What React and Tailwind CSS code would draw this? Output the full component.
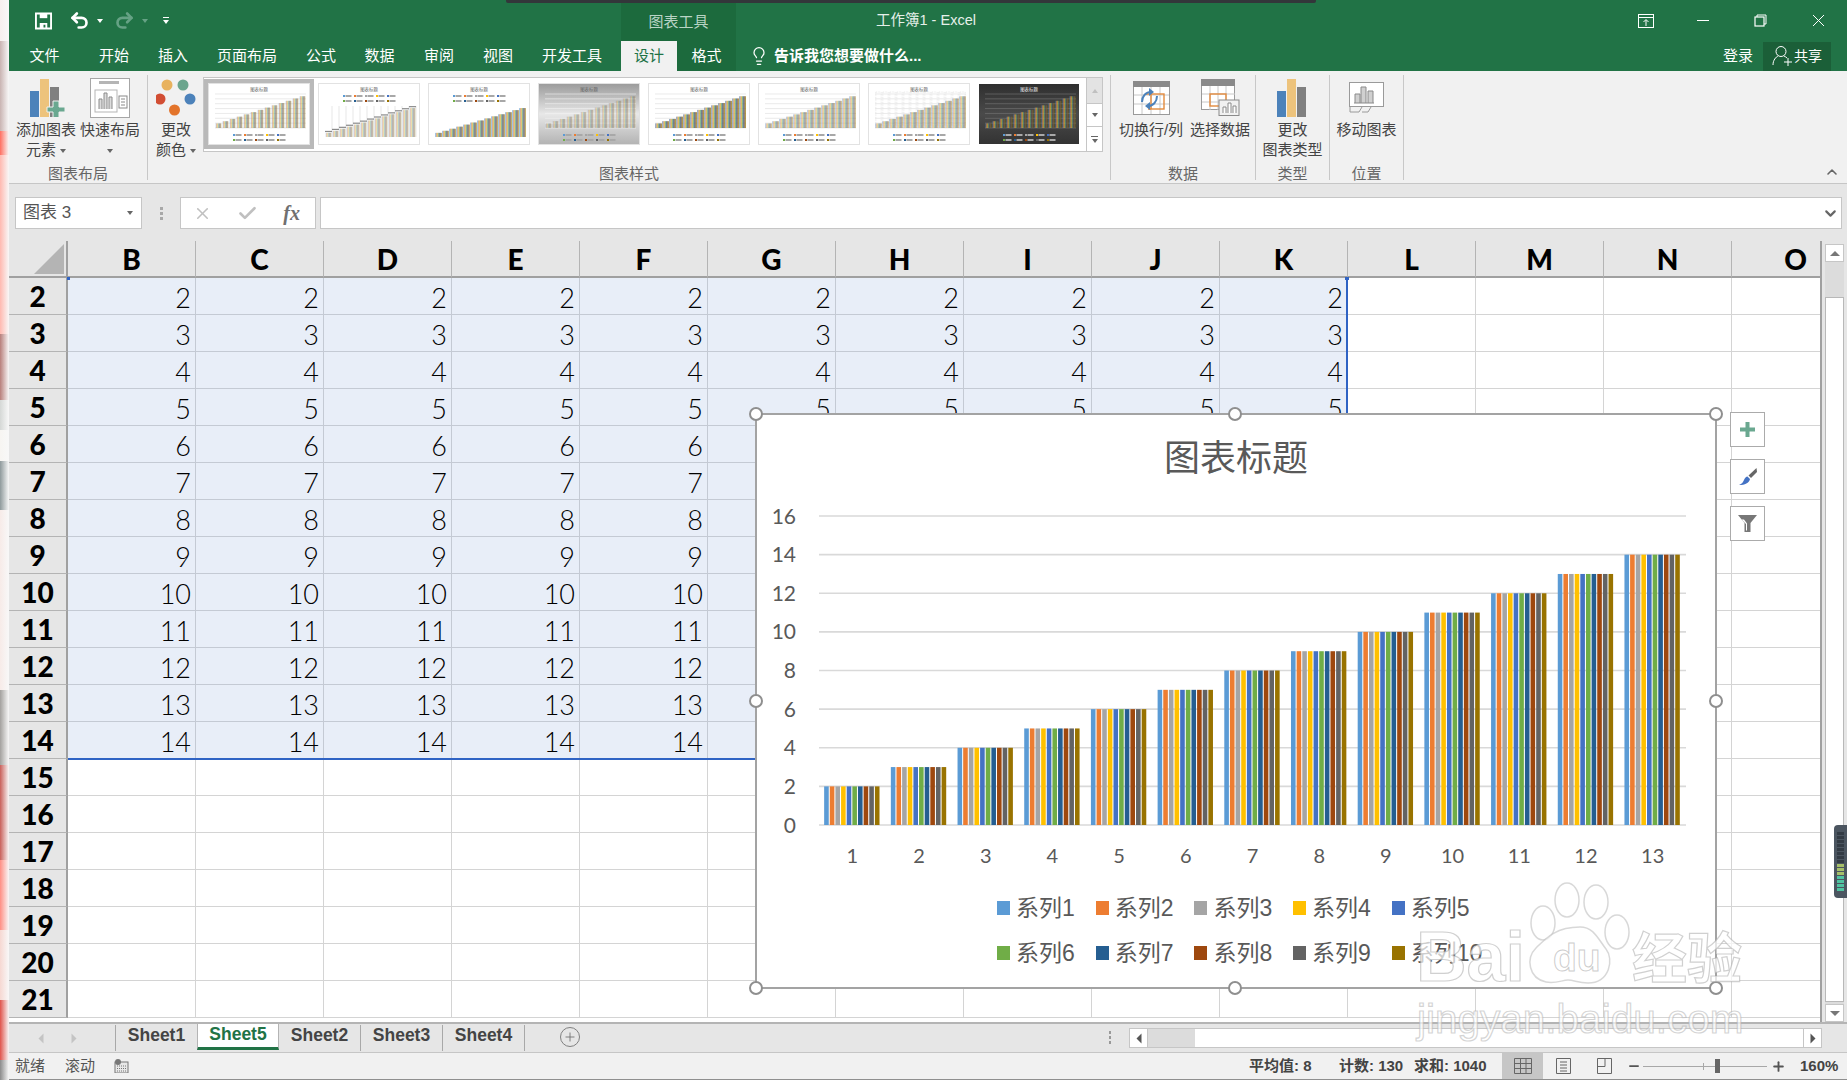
import React from 'react';
import { Undo2, Redo2, Lightbulb, Minus, Plus, X, Check, ChevronUp, ChevronDown } from 'lucide-react';

const COLORS = ['#5B9BD5', '#ED7D31', '#A5A5A5', '#FFC000', '#4472C4', '#70AD47', '#255E91', '#9E480E', '#636363', '#997300'];
const COLS = ['B', 'C', 'D', 'E', 'F', 'G', 'H', 'I', 'J', 'K', 'L', 'M', 'N', 'O'];
const ROWS = [2, 3, 4, 5, 6, 7, 8, 9, 10, 11, 12, 13, 14, 15, 16, 17, 18, 19, 20, 21];
const CATS = [1, 2, 3, 4, 5, 6, 7, 8, 9, 10, 11, 12, 13];

// the sliver of another window at the left edge
const STRIP = [
  [41, 'bg-[#f6efee]'], [90, 'bg-[#c9b4b2]'], [24, 'bg-[#ff6f61]'], [179, 'bg-[#ffb9b0]'], [66, 'bg-[#b87f7b]'],
  [30, 'bg-[#d5d8d6]'], [31, 'bg-[#f7f5f2]'], [49, 'bg-[#8f9a9c]'], [180, 'bg-[#f7ebe8]'], [75, 'bg-[#a3a19e]'],
  [95, 'bg-[#c9605a]'], [70, 'bg-[#ff8f84]'], [70, 'bg-[#f6d8d2]'], [60, 'bg-[#e0534b]'], [20, 'bg-[#8b8b8b]'],
];

const THUMBS = [
  { box: 'bg-white', top: false, grid: 'lines', op: 0.65, gap: 0.78 },
  { box: 'bg-white', top: true, grid: 'vert', op: 0.5, gap: 0.78 },
  { box: 'bg-white', top: true, grid: 'none', op: 0.9, gap: 0.9 },
  { box: 'bg-linear-to-b from-[#9c9c9c] via-[#e8e8e8] to-[#b4b4b4]', top: false, grid: 'band', op: 0.4, gap: 0.78 },
  { box: 'bg-white', top: false, grid: 'lines', op: 1, gap: 0.95 },
  { box: 'bg-white', top: false, grid: 'lines', op: 0.6, gap: 0.92 },
  { box: 'bg-white', top: false, grid: 'hatch', op: 0.6, gap: 0.92 },
  { box: 'bg-linear-to-b from-[#2f2f2f] via-[#4a4a4a] to-[#333333]', top: false, grid: 'dark', op: 0.85, gap: 0.8, dark: true },
];

const Thumb = ({ box, top, grid, op, gap, dark }) => {
  const y0 = top ? 22 : 10;
  const y1 = top ? 53 : 44;
  const x0 = 6;
  const x1 = 97;
  const gw = (x1 - x0) / 13;
  const lineCol = dark ? '#777777' : '#dcdcdc';
  return (
    <div className={`w-[100px] h-[60px] ${box} ${dark ? '' : 'outline outline-[#e2e2e2]'}`}>
      <svg width="100" height="60" viewBox="0 0 100 60" className="block">
        <text x="50" y="6.5" textAnchor="middle" fontSize="4.4" fill={dark ? '#eeeeee' : '#666666'} className="[font-family:'Noto_Sans_CJK_SC',sans-serif]">图表标题</text>
        {grid === 'lines' || grid === 'dark' || grid === 'band' || grid === 'hatch'
          ? [0, 1, 2, 3, 4, 5, 6, 7].map((n) => (
              <line key={n} x1={x0} x2={x1} y1={y0 + n * ((y1 - y0) / 7)} y2={y0 + n * ((y1 - y0) / 7)} stroke={grid === 'band' ? '#f4f4f4' : lineCol} strokeWidth="0.6" />
            ))
          : null}
        {grid === 'vert'
          ? CATS.map((n) => <line key={n} x1={x0 + n * gw} x2={x0 + n * gw} y1={y0} y2={y1} stroke="#cfcfcf" strokeWidth="0.5" />)
          : null}
        {grid === 'hatch'
          ? CATS.map((n) => <rect key={n} x={x0 + (n - 1) * gw + 0.8} y={y0 - 2} width={gw - 1.6} height={y1 - y0} fill="none" stroke="#d8d8d8" strokeWidth="0.5" strokeDasharray="1.5 1" />)
          : null}
        {CATS.map((c, i) =>
          COLORS.map((col, k) => {
            const h = (y1 - y0) * ((c + 1) / 15);
            const bw = (gw * gap) / 10;
            return <rect key={k} x={x0 + i * gw + ((1 - gap) * gw) / 2 + k * bw} y={y1 - h} width={bw} height={h} fill={col} fillOpacity={op} />;
          })
        )}
        {grid === 'vert' ? CATS.map((c, i) => <rect key={c} x={x0 + i * gw} y={y1 - (y1 - y0) * ((c + 1) / 15) - 2} width={gw} height="1.2" fill="#8a8a8a" />) : null}
        {[0, 1].map((r) =>
          COLORS.slice(r * 5, r * 5 + 5).map((col, k) => (
            <g key={k}>
              <rect x={24 + k * 11} y={(top ? 11 : 50) + r * 5} width="2" height="2" fill={col} />
              <rect x={26.5 + k * 11} y={(top ? 11 : 50) + r * 5} width="6" height="2" fill={dark ? '#aaaaaa' : '#a8a8a8'} />
            </g>
          ))
        )}
      </svg>
    </div>
  );
};

const BarsIcon = ({ plus }) => (
  <svg width="38" height="38" viewBox="0 0 38 38" className="block">
    <rect x="3" y="12" width="9" height="26" fill="#4c82ba" />
    <rect x="13" y="0" width="9" height="38" fill="#edc37c" />
    <rect x="23" y="8" width="9" height="30" fill="#808080" />
    {plus ? <path d="M26 22h6v6h6v5h-6v6h-6v-6h-6v-5h6z" fill="#6aa890" stroke="#f1f1f1" strokeWidth="1" /> : null}
  </svg>
);

const QuickLayoutIcon = () => (
  <svg width="40" height="40" viewBox="0 0 40 40" className="block">
    <rect x="0.5" y="0.5" width="39" height="39" fill="#fff" stroke="#a6a6a6" />
    <rect x="9" y="3" width="20" height="3" fill="#b5b5b5" />
    <rect x="5" y="12" width="22" height="22" fill="none" stroke="#b5b5b5" />
    <path d="M9 31v-10h3v10M14 31v-16h3v16M19 31v-12h3v12" fill="#dcdcdc" stroke="#8a8a8a" />
    <rect x="29" y="18" width="8" height="12" fill="none" stroke="#8a8a8a" />
    <path d="M31 21h4M31 24h4M31 27h4" stroke="#8a8a8a" />
  </svg>
);

const ColorsIcon = () => (
  <svg width="40" height="38" viewBox="0 0 40 38" className="block">
    <circle cx="11" cy="6" r="5.5" fill="#e8b25e" />
    <circle cx="27" cy="6" r="5.5" fill="#6ba58d" />
    <circle cx="4" cy="20" r="5.5" fill="#d24e33" />
    <circle cx="34" cy="20" r="5.5" fill="#4c82ba" />
    <circle cx="18.5" cy="31" r="5.5" fill="#e3742b" />
  </svg>
);

const SwitchIcon = () => (
  <svg width="37" height="34" viewBox="0 0 37 34" className="block">
    <rect x="0.5" y="0.5" width="36" height="33" fill="#fff" stroke="#9a9a9a" />
    <rect x="0" y="0" width="37" height="6" fill="#8a8a8a" />
    <path d="M1 14h35M1 23h35M9 6v27M18 6v27M27 6v27" stroke="#c8c8c8" />
    <rect x="18" y="13" width="13" height="15" fill="none" stroke="#e38a3d" strokeWidth="1.4" />
    <path d="M18 13h-6M18 28h-3" stroke="#e38a3d" strokeWidth="1.4" />
    <path d="M9 21c0-6 4-10 9-10M24 15c0 6-4 10-9 10" fill="none" stroke="#4c82ba" strokeWidth="2" />
    <path d="M16 7l5 4-5 4zM17 21l-5 4 5 4z" fill="#4c82ba" />
  </svg>
);

const SelectDataIcon = () => (
  <svg width="39" height="37" viewBox="0 0 39 37" className="block">
    <rect x="0.5" y="0.5" width="33" height="30" fill="#fff" stroke="#9a9a9a" />
    <rect x="0" y="0" width="34" height="7" fill="#8a8a8a" />
    <path d="M1 15h33M1 23h33M9 7v24M17 7v24M25 7v24" stroke="#c8c8c8" />
    <rect x="9" y="15" width="16" height="12" fill="none" stroke="#e38a3d" strokeWidth="1.4" />
    <rect x="18" y="21" width="20" height="15.5" fill="#f1f1f1" stroke="#8a8a8a" />
    <path d="M22 34v-6h3v6M27 34v-10h3v10M32 34v-7h3v7" fill="#fff" stroke="#8a8a8a" />
  </svg>
);

const MoveChartIcon = () => (
  <svg width="35" height="31" viewBox="0 0 35 31" className="block">
    <rect x="0.5" y="0.5" width="34" height="24" fill="#fff" stroke="#9a9a9a" />
    <path d="M6 21v-9h5v9M12 21v-16h5v16M19 21v-12h5v12" fill="#d0d0d0" stroke="#8a8a8a" />
    <path d="M5 21h20" stroke="#8a8a8a" />
    <path d="M1 25v5h9l3-5M13 30h6l3-5" fill="none" stroke="#9a9a9a" />
  </svg>
);

const SaveIcon = () => (
  <svg width="17" height="18" viewBox="0 0 18 18" className="block">
    <path d="M1 1h16v16H1z" fill="none" stroke="#fff" strokeWidth="2" />
    <rect x="5" y="1" width="8" height="5" fill="#fff" />
    <path d="M5 17v-6h8v6h-2v-4H9v4z" fill="#fff" />
  </svg>
);

const Caret = ({ className }) => <span className={`inline-block w-0 h-0 border-x-[3.5px] border-x-transparent border-t-[4px] ${className}`} />;

const RibbonBtn = ({ w, h, icon, children }) => (
  <div className={`${w} flex flex-col items-center`}>
    <div className={`${h} flex items-center justify-center`}>{icon}</div>
    <div className="text-[15px] leading-[20px] text-center text-[#444444] whitespace-nowrap">{children}</div>
  </div>
);

const Group = ({ w, label, children }) => (
  <div className="flex">
    <div className={`${w} flex flex-col pt-[4px]`}>
      <div className="h-[90px] flex">{children}</div>
      <div className="h-[18px] leading-[18px] text-[15px] text-center text-[#666666]">{label}</div>
    </div>
    <div className="w-px h-[105px] mt-[4px] bg-[#c8c8c8]" />
  </div>
);

const TitleBar = () => (
  <div className="h-[41px] flex items-stretch text-white">
    <div className="w-[612px] flex items-center">
      <div className="ml-[26px]"><SaveIcon /></div>
      <Undo2 size={21} strokeWidth={3} className="ml-[17px]" />
      <Caret className="ml-[7px] border-t-white" />
      <Redo2 size={21} strokeWidth={3} className="ml-[11px] text-[#66a285]" />
      <Caret className="ml-[7px] border-t-[#66a285]" />
      <div className="ml-[15px] flex flex-col items-center gap-[2px]">
        <div className="w-[6px] h-px bg-white" />
        <Caret className="border-t-white" />
      </div>
    </div>
    <div className="w-[115px] mt-[3px] bg-[#1c6a3d] flex items-center justify-center text-[15px] text-[#b9d4c5]">图表工具</div>
    <div className="w-[380px] pt-[1px] flex items-center justify-center text-[14.5px] text-[#e6f0ea]">工作簿1 - Excel</div>
    <div className="flex-1" />
    <div className="flex items-center">
      <div className="w-[57.5px] flex justify-center">
        <svg width="16" height="14" viewBox="0 0 16 14"><rect x="0.5" y="0.5" width="15" height="13" fill="none" stroke="#fff" /><path d="M1 3.5h14M8 12V6M5.5 8 8 5.5 10.5 8" fill="none" stroke="#fff" /></svg>
      </div>
      <div className="w-[57.5px] flex justify-center"><div className="w-[12px] h-px bg-white" /></div>
      <div className="w-[57.5px] flex justify-center">
        <svg width="13" height="13" viewBox="0 0 13 13"><path d="M3 3V1h9v9h-2" fill="none" stroke="#fff" /><rect x="1" y="3" width="9" height="9" fill="none" stroke="#fff" strokeWidth="1.2" /></svg>
      </div>
      <div className="w-[57.5px] flex justify-center">
        <svg width="13" height="13" viewBox="0 0 13 13"><path d="M1 1l11 11M12 1 1 12" stroke="#fff" /></svg>
      </div>
    </div>
  </div>
);

const TABS = [['文件', 'w-[71px]'], ['开始', 'w-[68px]'], ['插入', 'w-[50px]'], ['页面布局', 'w-[98px]'], ['公式', 'w-[50px]'], ['数据', 'w-[67px]'], ['审阅', 'w-[52px]'], ['视图', 'w-[66px]'], ['开发工具', 'w-[82px]']];

const TabRow = () => (
  <div className="h-[30px] flex items-stretch text-[15px] text-white">
    {TABS.map(([t, w]) => (
      <div key={t} className={`${w} flex items-center justify-center`}>{t}</div>
    ))}
    <div className="w-[8px]" />
    <div className="w-[115px] bg-[#1c6a3d] flex">
      <div className="w-[56px] bg-[#f1f1f1] text-[#217346] flex items-center justify-center">设计</div>
      <div className="flex-1 flex items-center justify-center">格式</div>
    </div>
    <div className="ml-[13px] flex items-center gap-[5px] font-bold text-[15px]">
      <Lightbulb size={20} strokeWidth={1.5} />
      告诉我您想要做什么...
    </div>
    <div className="flex-1" />
    <div className="flex items-center mr-[16px]">
      <div className="mr-[10px]">登录</div>
      <div className="w-[68px] h-[29px] bg-[#1b5f38] flex items-center justify-center gap-[2px]">
        <svg width="20" height="22" viewBox="0 0 20 22"><circle cx="9" cy="6.5" r="5" fill="none" stroke="#fff" /><path d="M1 20c0-5 3-8 5-9M12 11c1 .5 2 1 3 2M12 17h8M16 13v8" fill="none" stroke="#fff" /></svg>
        <span className="text-[14px]">共享</span>
      </div>
    </div>
  </div>
);

const Ribbon = () => (
  <div className="h-[113px] flex bg-[#f1f1f1] border-b border-[#c6c6c6]">
    <Group w="w-[138px]" label="图表布局">
      <div className="pl-[7px] flex gap-[4px]">
        <RibbonBtn w="w-[60px]" h="h-[45px]" icon={<BarsIcon plus />}>
          添加图表<br />元素 <Caret className="border-t-[#666666] align-middle" />
        </RibbonBtn>
        <RibbonBtn w="w-[60px]" h="h-[45px]" icon={<QuickLayoutIcon />}>
          快速布局<br /><Caret className="border-t-[#666666] align-middle" />
        </RibbonBtn>
      </div>
    </Group>
    <Group w="w-[962px]" label="图表样式">
      <div className="ml-px">
        <RibbonBtn w="w-[54px]" h="h-[45px]" icon={<ColorsIcon />}>
          更改<br />颜色 <Caret className="border-t-[#666666] align-middle" />
        </RibbonBtn>
      </div>
      <div className="w-[900px] h-[75px] mt-[2px] border border-[#c6c6c6] bg-white flex">
        <div className="flex flex-1 py-px">
          {THUMBS.map((t, i) => (
            <div key={i} className={`w-[110px] h-[70px] flex items-center justify-center ${i === 0 ? 'bg-[#b9b9b9]' : ''}`}>
              <Thumb {...t} />
            </div>
          ))}
        </div>
        <div className="w-[16px] flex flex-col border-l border-[#c6c6c6]">
          <div className="h-[26px] bg-[#e3e3e3] border-b border-[#c6c6c6] flex items-center justify-center"><Caret className="rotate-180 border-t-[#c0c0c0]" /></div>
          <div className="h-[23px] bg-white border-b border-[#c6c6c6] flex items-center justify-center"><Caret className="border-t-[#666666]" /></div>
          <div className="flex-1 bg-white flex flex-col items-center justify-center gap-[2px]"><div className="w-[7px] h-px bg-[#666666]" /><Caret className="border-t-[#666666]" /></div>
        </div>
      </div>
    </Group>
    <Group w="w-[144px]" label="数据">
      <div className="pl-[6px] flex gap-px">
        <RibbonBtn w="w-[68px]" h="h-[45px]" icon={<SwitchIcon />}>切换行/列</RibbonBtn>
        <RibbonBtn w="w-[68px]" h="h-[45px]" icon={<SelectDataIcon />}>选择数据</RibbonBtn>
      </div>
    </Group>
    <Group w="w-[73px]" label="类型">
      <RibbonBtn w="w-[73px]" h="h-[45px]" icon={<BarsIcon />}>
        更改<br />图表类型
      </RibbonBtn>
    </Group>
    <Group w="w-[73px]" label="位置">
      <RibbonBtn w="w-[73px]" h="h-[45px]" icon={<MoveChartIcon />}>移动图表</RibbonBtn>
    </Group>
    <div className="flex-1 flex items-end justify-end pb-[3px] pr-[7px]">
      <ChevronUp size={16} strokeWidth={2.4} className="text-[#666666]" />
    </div>
  </div>
);

const FormulaBar = () => (
  <div className="h-[57px] flex items-start pt-[13px] bg-[#e6e6e6]">
    <div className="ml-[6px] w-[127px] h-[32px] bg-white border border-[#c6c6c6] flex items-center justify-between pl-[7px] pr-[8px] text-[17px] text-[#555555]">
      图表 3
      <Caret className="border-t-[#666666]" />
    </div>
    <div className="w-[38px] h-[32px] flex flex-col items-center justify-center gap-[2px]">
      <div className="w-[3px] h-[3px] bg-[#a8a8a8]" />
      <div className="w-[3px] h-[3px] bg-[#a8a8a8]" />
      <div className="w-[3px] h-[3px] bg-[#a8a8a8]" />
    </div>
    <div className="w-[136px] h-[32px] bg-white border border-[#c6c6c6] flex items-center justify-between pl-[12px] pr-[15px] text-[#c0c0c0]">
      <X size={19} strokeWidth={2} />
      <Check size={21} strokeWidth={3} />
      <span className="[font-family:'Liberation_Serif',serif] italic font-bold text-[20px] text-[#707070]">fx</span>
    </div>
    <div className="ml-[4px] w-[1522px] h-[32px] bg-white border border-[#c6c6c6] flex items-center justify-end pr-[2px]">
      <ChevronDown size={17} strokeWidth={3} className="text-[#666666]" />
    </div>
  </div>
);

const SheetGrid = () => (
  <div className="w-[1813px] h-full overflow-hidden border-r-2 border-[#a0a0a0] grid grid-cols-[59px_repeat(14,128px)] auto-rows-[37px] bg-white">
    <div className="bg-[#e6e6e6] border-b-2 border-r-2 border-[#a0a0a0] flex items-end justify-end p-[2px]">
      <svg width="30" height="30" viewBox="0 0 30 30"><polygon points="30,0 30,30 0,30" fill="#b4b4b4" /></svg>
    </div>
    {COLS.map((c) => (
      <div key={c} className="bg-[#e6e6e6] border-b-2 border-r border-b-[#a0a0a0] border-r-[#b4b4b4] flex items-center justify-center text-[28px] font-black text-black [font-family:Lato,sans-serif]">{c}</div>
    ))}
    {ROWS.map((r) => (
      <React.Fragment key={r}>
        <div className="bg-[#e6e6e6] border-b border-r-2 border-b-[#b4b4b4] border-r-[#a0a0a0] flex items-center justify-center text-[28px] font-black text-black [font-family:Lato,sans-serif]">{r}</div>
        {COLS.map((c, i) => {
          const sel = r <= 14 && i < 10;
          // G:K from row 6 down lie under the chart, so nothing there is seen
          const shown = sel && !(i >= 5 && r >= 6);
          return (
            <div key={c} className={`border-b border-r flex items-end justify-end pr-[4px] text-[27px] leading-[32px] font-light text-black [font-family:Lato,sans-serif] ${sel ? 'bg-[#e8eef8] border-[#c4cad4]' : 'border-[#d4d4d4]'}`}>
              {shown ? r : ''}
            </div>
          );
        })}
      </React.Fragment>
    ))}
  </div>
);

const Selection = () => (
  <div className="absolute left-[59px] top-[37px] w-[1280px] h-[482px] border-r-2 border-b-2 border-[#2f63c4]">
    <div className="absolute -left-px -top-px w-[3px] h-[3px] bg-[#2f63c4]" />
    <div className="absolute -right-[3px] -top-px w-[4px] h-[3px] bg-[#2f63c4]" />
  </div>
);

const Handle = ({ className }) => <div className={`absolute w-[14px] h-[14px] rounded-full bg-white border-[2.5px] border-[#8f8f8f] ${className}`} />;

const Chart = () => (
  <div className="absolute left-[746px] top-[172px] w-[962px] h-[576px] bg-white border-2 border-[#a3a3a3]">
    <Handle className="-left-[8px] -top-[8px]" />
    <Handle className="left-[471px] -top-[8px]" />
    <Handle className="-right-[8px] -top-[8px]" />
    <Handle className="-left-[8px] top-[279px]" />
    <Handle className="-right-[8px] top-[279px]" />
    <Handle className="-left-[8px] -bottom-[8px]" />
    <Handle className="left-[471px] -bottom-[8px]" />
    <Handle className="-right-[8px] -bottom-[8px]" />
    <div className="h-[86px] pt-[20px] text-center text-[36px] leading-[48px] text-[#595959]">图表标题</div>
    <svg width="958" height="389" viewBox="0 0 958 389" className="block">
      {[0, 2, 4, 6, 8, 10, 12, 14, 16].map((v) => {
        const y = 324 - v * 19.31;
        return (
          <g key={v}>
            <line x1="62" x2="929" y1={y} y2={y} stroke="#d9d9d9" strokeWidth="1.6" />
            <text x="39" y={y + 7.5} textAnchor="end" fontSize="21" fill="#595959" className="[font-family:Lato,sans-serif]">{v}</text>
          </g>
        );
      })}
      {CATS.map((c, i) => {
        const cx = 62 + (i + 0.5) * (867 / 13);
        return (
          <g key={c}>
            {COLORS.map((col, k) => (
              <rect key={col} x={cx - 28.2 + k * 5.64} y={324 - (c + 1) * 19.31} width="4.6" height={(c + 1) * 19.31} fill={col} />
            ))}
            <text x={cx} y="362" textAnchor="middle" fontSize="20" fill="#595959" className="[font-family:Lato,sans-serif]">{c}</text>
          </g>
        );
      })}
    </svg>
    <div className="pl-[240px] grid grid-cols-[repeat(5,98.7px)] auto-rows-[36px] gap-y-[9px] text-[23px] leading-[36px] text-[#595959]">
      {COLORS.map((col, i) => (
        <div key={col} className="flex items-center gap-[6px] whitespace-nowrap">
          <div className="w-[13px] h-[14px]" style={{ backgroundColor: col }} />
          系列{i + 1}
        </div>
      ))}
    </div>
  </div>
);

const ChartBtn = ({ children }) => (
  <div className="w-[35px] h-[35px] bg-white border border-[#ababab] flex items-center justify-center">{children}</div>
);

const ChartTools = () => (
  <div className="absolute left-[1721px] top-[171px] flex flex-col gap-[12px]">
    <ChartBtn>
      <svg width="15" height="15" viewBox="0 0 15 15"><path d="M5.5 0h4v5.5H15v4H9.5V15h-4V9.5H0v-4h5.5z" fill="#6aa890" /></svg>
    </ChartBtn>
    <ChartBtn>
      <svg width="18" height="18" viewBox="0 0 18 18"><path d="M17.5 0l.5 4-6 6-2.5-2.5z" fill="#666666" /><path d="M8.5 8.5l2.5 2.5c-1 4-5 6-11 6 3-1 4-3 5-5 1-2 2-3.5 3.500-3.500z" fill="#4472c4" /></svg>
    </ChartBtn>
    <ChartBtn>
      <svg width="19" height="17" viewBox="0 0 19 17"><path d="M0 0h19l-6.500 8v9h-6V8z" fill="#777777" /><path d="M3.500 4.500 8 9v6.500h1V8.500L6 4.500z" fill="#fff" /></svg>
    </ChartBtn>
  </div>
);

const Scrollbar = () => (
  <div className="w-[22px] pl-[3px] pt-[3px]">
    <div className="w-[19px] h-[778px] flex flex-col bg-[#dcdcdc]">
      <div className="h-[18px] bg-white border border-[#c6c6c6] flex items-center justify-center"><Caret className="rotate-180 border-t-[#777777] border-x-[5px] border-t-[5px]" /></div>
      <div className="h-[35px]" />
      <div className="flex-1 bg-white border border-[#b8b8b8]" />
      <div className="h-[18px] mt-[2px] bg-white border border-[#c6c6c6] flex items-center justify-center"><Caret className="border-t-[#777777] border-x-[5px] border-t-[5px]" /></div>
    </div>
  </div>
);

// floating widget from another app that sits on the right edge
const SideWidget = () => (
  <div className="absolute right-0 top-[825px] w-[13px] h-[73px] rounded-l-[4px] bg-[#4b5560] flex flex-col items-center justify-center gap-px">
    {[0, 1, 2, 3, 4, 5, 6, 7, 8, 9, 10, 11, 12, 13, 14].map((n) => (
      <div key={n} className={`w-[7px] h-[3px] ${n < 8 ? 'bg-[#333b44]' : n < 11 ? 'bg-[#a6bf6a]' : 'bg-[#4fc3a1]'}`} />
    ))}
  </div>
);

const SHEETS = ['Sheet1', 'Sheet5', 'Sheet2', 'Sheet3', 'Sheet4'];

const SheetTabs = () => (
  <div className="h-[30px] flex bg-[#e6e6e6] border-t-2 border-[#b4b4b4]">
    <div className="w-[106px] flex items-center pl-[27px] gap-[23px]">
      <Caret className="rotate-90 border-t-[#c4c4c4] border-x-[5px] border-t-[5px]" />
      <Caret className="-rotate-90 border-t-[#c4c4c4] border-x-[5px] border-t-[5px]" />
    </div>
    {SHEETS.map((s, i) => (
      <div key={s} className={`w-[82px] h-[26px] flex items-start justify-center text-[17.5px] font-bold leading-[20px] ${i === 1 ? 'bg-white text-[#217346] border-x border-[#b4b4b4] border-b-[3px] border-b-[#217346]' : 'text-[#444444]'} ${i !== 1 && i !== 0 ? 'border-r border-[#a8a8a8] my-[1px]' : ''} ${i === 0 ? 'border-l border-[#a8a8a8] my-[1px]' : ''}`}>
        {s}
      </div>
    ))}
    <div className="ml-[35px] h-[26px] flex items-center">
      <div className="w-[20px] h-[20px] rounded-full border border-[#808080] flex items-center justify-center">
        <Plus size={14} strokeWidth={1.5} className="text-[#707070]" />
      </div>
    </div>
    <div className="ml-[522px] w-[16px] h-[26px] flex flex-col items-center justify-center gap-[2px]">
      <div className="w-[2px] h-[3px] bg-[#999999]" />
      <div className="w-[2px] h-[3px] bg-[#999999]" />
      <div className="w-[2px] h-[3px] bg-[#999999]" />
    </div>
    <div className="ml-[11px] mt-[4px] w-[693px] h-[20px] flex bg-[#dcdcdc] border border-[#c6c6c6]">
      <div className="w-[18px] bg-white border-r border-[#c6c6c6] flex items-center justify-center"><Caret className="rotate-90 border-t-[#555555] border-x-[5px] border-t-[5px]" /></div>
      <div className="w-[47px]" />
      <div className="flex-1 bg-white" />
      <div className="w-[18px] bg-white border-l border-[#c6c6c6] flex items-center justify-center"><Caret className="-rotate-90 border-t-[#555555] border-x-[5px] border-t-[5px]" /></div>
    </div>
  </div>
);

const StatusBar = () => (
  <div className="h-[28px] flex items-center bg-[#f1f1f1] border-t border-[#c6c6c6] border-b border-b-[#8f8f8f] text-[15px] text-[#555555]">
    <div className="ml-[6px] w-[50px]">就绪</div>
    <div className="w-[49px]">滚动</div>
    <svg width="15" height="14" viewBox="0 0 15 14"><rect x="1" y="3" width="13" height="11" fill="#e8e8e8" stroke="#777777" /><circle cx="4" cy="3" r="3" fill="#777777" /><path d="M3 7h9M3 9.5h9M3 12h9" stroke="#777777" strokeDasharray="1 1" /></svg>
    <div className="ml-[1120px] w-[90px] font-bold text-[15px] text-[#444444]">平均值: 8</div>
    <div className="w-[75px] font-bold text-[15px] text-[#444444] whitespace-nowrap">计数: 130</div>
    <div className="w-[88px] font-bold text-[15px] text-[#444444] whitespace-nowrap overflow-hidden">求和: 1040</div>
    <div className="w-[41px] h-full bg-[#c6c6c6] flex items-center justify-center">
      <svg width="18" height="16" viewBox="0 0 18 16"><path d="M.5.5h17v15H.5zM.5 5.5h17M.5 10.5h17M6.5.5v15M12 .5v15" fill="none" stroke="#666666" /></svg>
    </div>
    <div className="w-[41px] flex justify-center">
      <svg width="15" height="16" viewBox="0 0 15 16"><path d="M.5.5h14v15H.5zM4 4h7M4 7h7M4 10h7M4 13h7" fill="none" stroke="#666666" /></svg>
    </div>
    <div className="w-[41px] flex justify-center">
      <svg width="15" height="16" viewBox="0 0 15 16"><path d="M.5.5h14v15H.5zM8 .5v8H.5" fill="none" stroke="#666666" /></svg>
    </div>
    <div className="ml-[2px]"><Minus size={14} strokeWidth={3} className="text-[#555555]" /></div>
    <div className="relative w-[124px] h-[14px] mx-[2px] flex items-center">
      <div className="w-full h-px bg-[#a8a8a8]" />
      <div className="absolute left-[60px] w-px h-[7px] bg-[#a8a8a8]" />
      <div className="absolute left-[72px] w-[5px] h-[14px] bg-[#666666]" />
    </div>
    <Plus size={15} strokeWidth={3} className="ml-[2px] text-[#555555]" />
    <div className="ml-[14px] font-bold text-[15px] text-[#444444]">160%</div>
  </div>
);

const Watermark = () => (
  <div className="absolute left-[1410px] top-[880px] w-[345px] h-[165px] pointer-events-none [font-family:'Liberation_Sans','Noto_Sans_CJK_SC',sans-serif]">
    <svg width="345" height="110" viewBox="0 0 345 110" className="absolute left-0 top-0">
      <g fill="#fff" fillOpacity="0.65" stroke="#b8b8b8" strokeOpacity="0.55" strokeWidth="1.5">
        <ellipse cx="133" cy="43" rx="12" ry="17" />
        <ellipse cx="157" cy="20" rx="12" ry="17" />
        <ellipse cx="186" cy="22" rx="12" ry="17" />
        <ellipse cx="207" cy="52" rx="12" ry="17" />
        <path d="M170 47c14 0 18 12 26 22 8 10 4 34-18 34-10 0-14-3-20-3s-12 4-22 2c-18-4-20-24-10-34 10-10 20-21 44-21z" />
      </g>
    </svg>
    <div className="absolute left-[6px] top-[42px] text-[70px] leading-[70px] font-bold text-white/70 [-webkit-text-stroke:1.2px_rgba(170,170,170,0.55)]">Bai</div>
    <div className="absolute left-[143px] top-[56px] text-[39px] leading-[44px] font-bold text-white/70 [-webkit-text-stroke:1px_rgba(170,170,170,0.6)]">du</div>
    <div className="absolute left-[222px] top-[46px] text-[55px] leading-[66px] font-bold text-white/70 [-webkit-text-stroke:1.2px_rgba(170,170,170,0.55)] whitespace-nowrap">经验</div>
    <div className="absolute left-[7px] top-[116px] text-[40.5px] leading-[46px] text-white/70 [-webkit-text-stroke:1.2px_rgba(170,170,170,0.5)] whitespace-nowrap">jingyan.baidu.com</div>
  </div>
);

export default function App() {
  return (
    <div className="relative w-[1847px] h-[1080px] flex overflow-hidden bg-[#e6e6e6] [font-family:'Liberation_Sans','Noto_Sans_CJK_SC',sans-serif]">
      <div className="relative w-[9px] flex flex-col">
        {STRIP.map(([h, c], i) => (
          <div key={i} className={`w-full flex-none ${c}`} style={{ height: h }} />
        ))}
        <div className="absolute inset-0 bg-linear-to-r from-transparent to-[#f8f8f8]" />
      </div>
      <div className="w-[1838px] flex flex-col">
        <div className="bg-[#217346]">
          <TitleBar />
          <TabRow />
        </div>
        <Ribbon />
        <FormulaBar />
        <div className="relative flex h-[781px] overflow-hidden">
          <SheetGrid />
          <Scrollbar />
          <Selection />
          <Chart />
          <ChartTools />
        </div>
        <SheetTabs />
        <StatusBar />
      </div>
      <div className="absolute left-[506px] top-0 w-[810px] h-[3px] bg-[#33363a] rounded-b-[2px]" />
      <SideWidget />
      <Watermark />
    </div>
  );
}
